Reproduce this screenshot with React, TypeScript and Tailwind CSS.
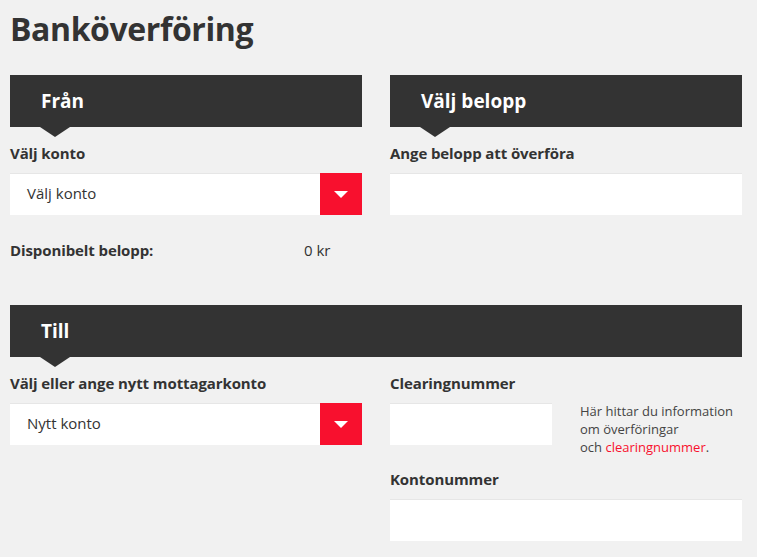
import { ReactNode } from "react";

const SectionHeader = ({ title }: { title: string }) => (
  <div className="relative h-[52px] bg-[#333333] flex items-center pl-[31px]">
    <h2 className="text-[19px] font-bold text-white leading-none">{title}</h2>
    <span className="absolute left-[30px] top-full w-0 h-0 border-l-[15px] border-r-[15px] border-t-[10px] border-l-transparent border-r-transparent border-t-[#333333]" />
  </div>
);

const Label = ({ children }: { children: ReactNode }) => (
  <label className="block text-[15px] font-bold text-[#333333] leading-5 tracking-[-0.1px]">{children}</label>
);

const SelectBox = ({ value }: { value: string }) => (
  <div className="flex h-[42px] bg-white border-t border-[#e6e6e6]">
    <div className="flex-1 flex items-center pl-[17px] pb-[3px] text-[15px] text-[#333333]">{value}</div>
    <div className="w-[42px] -mt-px bg-[#f8102e] flex items-center justify-center">
      <span className="w-0 h-0 border-l-[7px] border-r-[7px] border-t-[7px] border-l-transparent border-r-transparent border-t-white" />
    </div>
  </div>
);

const TextInput = ({ className = "" }: { className?: string }) => (
  <input type="text" className={`block h-[42px] bg-white border-t border-[#e6e6e6] outline-none ${className}`} />
);

const App = () => {
  return (
    <div className="min-h-screen bg-[#f1f1f1] pl-[10px] pr-[15px] pt-[7px] font-['Open_Sans',sans-serif] text-[#333333]">
      <h1 className="text-[32px] font-bold leading-[44px] tracking-[-0.4px]">Banköverföring</h1>

      {/* Från / Välj belopp */}
      <div className="grid grid-cols-2 gap-[28px] mt-[24px]">
        <div>
          <SectionHeader title="Från" />
          <div className="mt-[16px]">
            <Label>Välj konto</Label>
          </div>
          <div className="mt-[10px]">
            <SelectBox value="Välj konto" />
          </div>
          <div className="flex mt-[25px] text-[15px] leading-5">
            <span className="font-bold w-[294px] tracking-[-0.1px]">Disponibelt belopp:</span>
            <span>0 kr</span>
          </div>
        </div>
        <div>
          <SectionHeader title="Välj belopp" />
          <div className="mt-[16px]">
            <Label>Ange belopp att överföra</Label>
          </div>
          <div className="mt-[10px]">
            <TextInput className="w-full" />
          </div>
        </div>
      </div>

      {/* Till */}
      <div className="mt-[45px]">
        <SectionHeader title="Till" />
        <div className="grid grid-cols-2 gap-[28px] mt-[16px]">
          <div>
            <Label>Välj eller ange nytt mottagarkonto</Label>
            <div className="mt-[10px]">
              <SelectBox value="Nytt konto" />
            </div>
          </div>
          <div>
            <Label>Clearingnummer</Label>
            <div className="flex mt-[10px]">
              <TextInput className="w-[162px]" />
              <p className="ml-[28px] mt-[-1px] text-[13px] leading-[18px] text-[#444444]">
                Här hittar du information
                <br />
                om överföringar
                <br />
                och <a className="text-[#f8102e]">clearingnummer</a>.
              </p>
            </div>
            <div className="mt-[13px]">
              <Label>Kontonummer</Label>
            </div>
            <div className="mt-[10px]">
              <TextInput className="w-full" />
            </div>
          </div>
        </div>
      </div>
    </div>
  );
};

export default App;
